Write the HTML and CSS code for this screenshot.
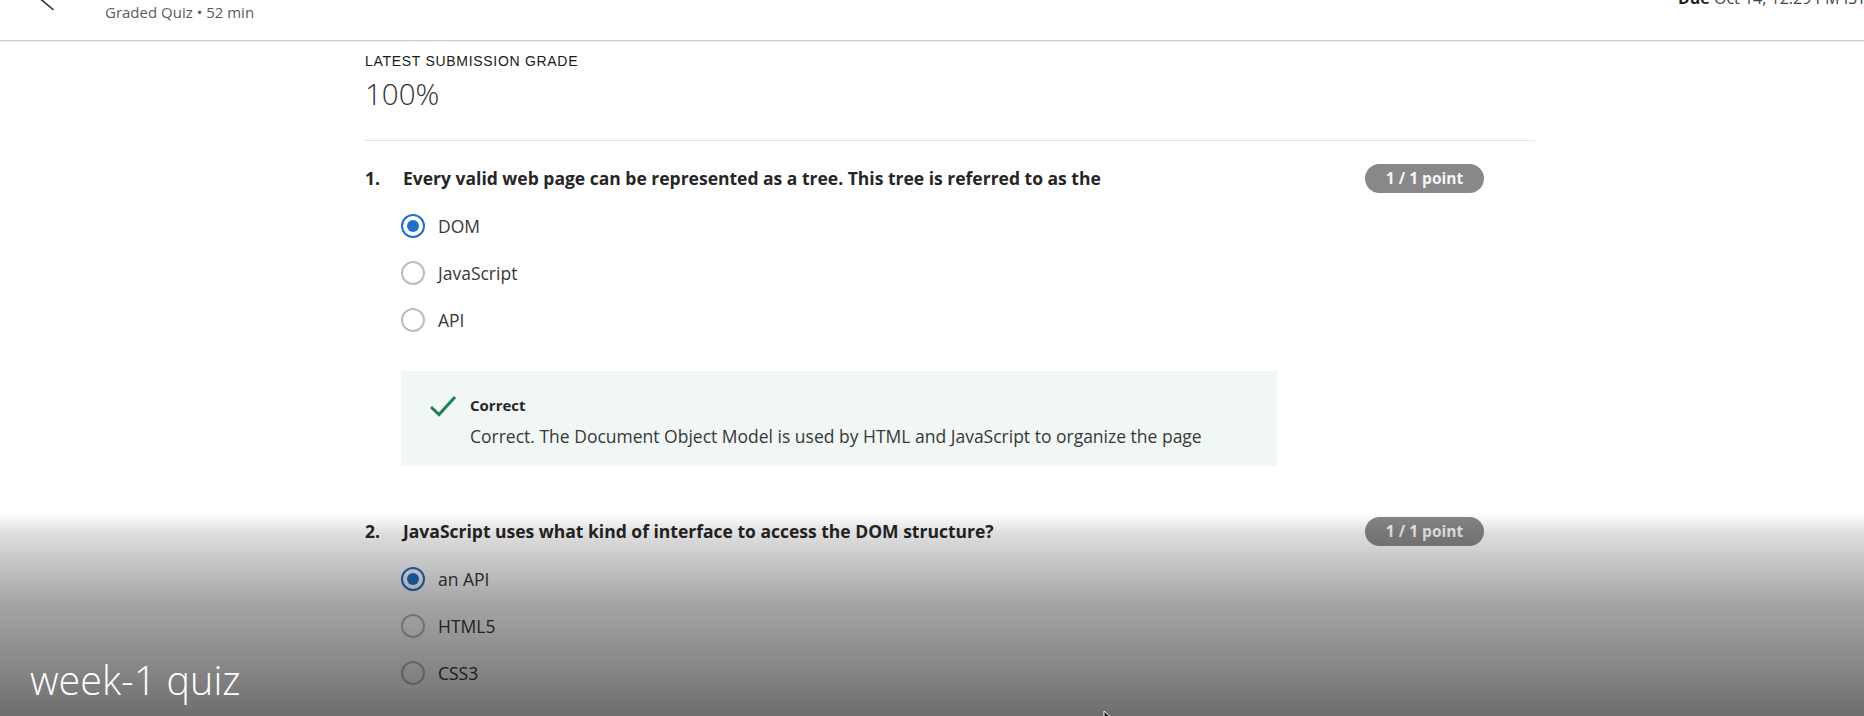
FILE: index.html
```html
<!DOCTYPE html>
<html lang="en">
<head>
<meta charset="utf-8">
<title>Graded Quiz</title>
<link rel="stylesheet" href="styles.css">
</head>
<body>
<div class="page">
  <header class="topbar">
    <div class="back">
      <svg width="105" height="40" viewBox="0 0 105 40"><line x1="31" y1="-9" x2="53" y2="9.5" stroke="#2b2b2b" stroke-width="1.6" stroke-linecap="round"/></svg>
    </div>
    <div class="meta">Graded Quiz • 52 min</div>
    <div class="due"><b>Due</b> Oct 14, 12:29 PM IST</div>
  </header>

  <main class="content">
    <div class="grade-label">LATEST SUBMISSION GRADE</div>
    <div class="grade-value">100%</div>
    <hr class="divider">

    <section class="question">
      <div class="q-head">
        <span class="q-num">1.</span>
        <span class="q-text">Every valid web page can be represented as a tree. This tree is referred to as the</span>
        <span class="badge">1 / 1 point</span>
      </div>
      <div class="options">
        <div class="option"><span class="radio checked"></span><span class="opt-text">DOM</span></div>
        <div class="option"><span class="radio"></span><span class="opt-text">JavaScript</span></div>
        <div class="option"><span class="radio"></span><span class="opt-text">API</span></div>
      </div>
      <div class="feedback">
        <svg class="check" width="28" height="22" viewBox="0 0 28 22"><polyline points="2,12 10,19.5 26,2" fill="none" stroke="#1e8052" stroke-width="3"/></svg>
        <div class="fb-body">
          <div class="fb-title">Correct</div>
          <div class="fb-text">Correct. The Document Object Model is used by HTML and JavaScript to organize the page</div>
        </div>
      </div>
    </section>

    <section class="question q2">
      <div class="q-head">
        <span class="q-num">2.</span>
        <span class="q-text">JavaScript uses what kind of interface to access the DOM structure?</span>
        <span class="badge">1 / 1 point</span>
      </div>
      <div class="options">
        <div class="option"><span class="radio checked"></span><span class="opt-text">an API</span></div>
        <div class="option"><span class="radio"></span><span class="opt-text">HTML5</span></div>
        <div class="option"><span class="radio"></span><span class="opt-text">CSS3</span></div>
      </div>
    </section>
  </main>

  <div class="shade">
    <div class="caption">week-1 quiz</div>
  </div>
  <svg class="cursor" width="14" height="20" viewBox="0 0 14 20"><path d="M1 1 L1 16 L5 12 L8 19 L10 18 L7 11 L12 11 Z" fill="#111" stroke="#fff" stroke-width="1"/></svg>
</div>
</body>
</html>
```

FILE: styles.css
```css
* { box-sizing: border-box; }

html, body {
  margin: 0;
  padding: 0;
  background: #ffffff;
}

body {
  font-family: "Open Sans", "Noto Sans", "Liberation Sans", sans-serif;
  color: #1f1f1f;
}

.page {
  position: relative;
  width: 1864px;
  height: 716px;
  overflow: hidden;
  background: #ffffff;
}

/* top bar */
.topbar {
  display: flex;
  height: 41px;
  border-bottom: 1px solid #cdcdcd;
  box-shadow: 0 1px 1px rgba(0, 0, 0, 0.05);
}

.back {
  width: 105px;
  flex: none;
}

.back svg { display: block; }

.meta {
  flex: 1;
  padding-top: 2px;
  font-size: 15px;
  line-height: 20px;
  color: #5b5b5b;
}

.due {
  width: 186px;
  flex: none;
  margin-top: -12px;
  font-size: 16px;
  line-height: 20px;
  white-space: nowrap;
  color: #444;
}

.due b { color: #1f1f1f; }

/* content column */
.content {
  margin-left: 365px;
  width: 1170px;
}

.grade-label {
  margin-top: 12px;
  font-family: "Liberation Sans", Arial, sans-serif;
  font-size: 14px;
  line-height: 16px;
  letter-spacing: 0.7px;
  color: #1a1a1a;
}

.grade-value {
  margin-top: 7px;
  font-size: 29.5px;
  font-weight: 300;
  line-height: 36px;
  color: #333;
}

.divider {
  margin: 28px 0 0;
  border: 0;
  border-top: 1px solid #e3e3e3;
  height: 0;
}

.question {
  margin-top: 25px;
}

.q2 {
  margin-top: 53px;
}

.q-head {
  display: flex;
  align-items: flex-start;
}

.q-num {
  width: 38px;
  flex: none;
  font-size: 17.5px;
  font-weight: 700;
  line-height: 24px;
  color: #262626;
}

.q-text {
  flex: 1;
  font-size: 17.5px;
  font-weight: 700;
  line-height: 24px;
  color: #262626;
}

.badge {
  flex: none;
  width: 119px;
  height: 29px;
  margin-top: -2px;
  margin-right: 51px;
  border-radius: 15px;
  background: #888888;
  color: #f6f6f6;
  font-size: 15.5px;
  font-weight: 700;
  line-height: 29px;
  text-align: center;
}

.options {
  margin: 21px 0 0 36px;
  display: flex;
  flex-direction: column;
  gap: 23px;
}

.option {
  display: flex;
  align-items: center;
  gap: 13px;
  height: 24px;
}

.radio {
  width: 24px;
  height: 24px;
  flex: none;
  border-radius: 50%;
  border: 2px solid #bdbdbd;
  display: flex;
  align-items: center;
  justify-content: center;
  background: #fff;
}

.radio.checked {
  border: 2.5px solid #1f6fd3;
}

.radio.checked::after {
  content: "";
  width: 12px;
  height: 12px;
  border-radius: 50%;
  background: #1f6fd3;
}

.opt-text {
  font-size: 17.5px;
  line-height: 24px;
  color: #383838;
}

.feedback {
  margin: 39px 0 0 36px;
  width: 876px;
  height: 95px;
  background: #f1f7f4;
  padding: 24px 20px 0 28px;
  display: flex;
  align-items: flex-start;
}

.check {
  flex: none;
  display: block;
  margin-top: 0;
  margin-right: 13px;
}

.fb-title {
  font-size: 15px;
  font-weight: 700;
  line-height: 20px;
  color: #262626;
}

.fb-text {
  margin-top: 9px;
  font-size: 17.5px;
  line-height: 24px;
  color: #383838;
}

/* video caption shade */
.shade {
  position: absolute;
  left: 0;
  right: 0;
  bottom: 0;
  height: 203px;
  background: linear-gradient(to bottom,
    rgba(0, 0, 0, 0) 0%,
    rgba(0, 0, 0, 0.13) 10%,
    rgba(0, 0, 0, 0.35) 43%,
    rgba(0, 0, 0, 0.48) 77%,
    rgba(0, 0, 0, 0.57) 100%);
}

.caption {
  position: absolute;
  left: 30px;
  bottom: 12px;
  font-size: 39.5px;
  font-weight: 300;
  line-height: 48px;
  color: #ffffff;
}

.cursor {
  position: absolute;
  left: 1103px;
  top: 710px;
}
```
